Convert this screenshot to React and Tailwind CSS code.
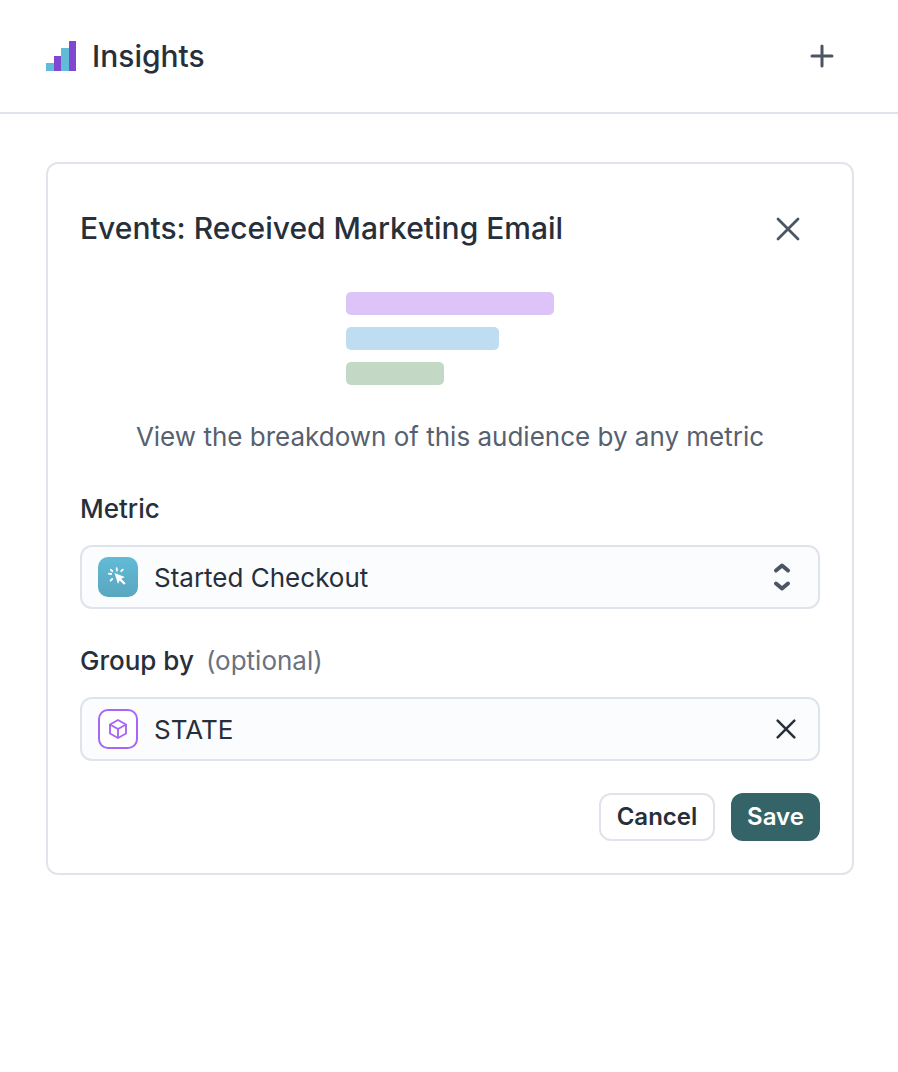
import React from "react";

const Cursor = () => (
  <svg width="24" height="24" viewBox="0 0 24 24" fill="none">
    <path d="M8.5 8 L18.8 12 L15.2 13.8 L19.6 18.2 L18 19.8 L13.6 15.4 L12 19 Z" fill="#fff" />
    <path d="M10.7 3.2 L10.9 5.6 M2.8 8.6 L5.2 9 M4.8 4.8 L6.4 6.2 M16.8 4.6 L15.2 6.2 M4.6 15.6 L6.2 14" stroke="#fff" strokeWidth="1.8" strokeLinecap="round" />
  </svg>
);

const Cube = () => (
  <svg width="20" height="20" viewBox="0 0 20 20" fill="none" stroke="#a866f5" strokeWidth="1.9" strokeLinejoin="round">
    <path d="M10 1 L18 5.5 V14.5 L10 19 L2 14.5 V5.5 Z" />
    <path d="M2 5.5 L10 10 L18 5.5 M10 10 V19" />
  </svg>
);

const X = ({ size, color, sw }) => (
  <svg width={size} height={size} viewBox="0 0 24 24" fill="none" stroke={color} strokeWidth={sw} strokeLinecap="round">
    <path d="M2 2 L22 22 M22 2 L2 22" />
  </svg>
);

export default function App() {
  return (
    <div className="h-[1072px] w-[898px] bg-white font-['Inter',sans-serif] text-[#272f3a]">
      <header className="flex h-[114px] items-center justify-between border-b-2 border-[#dfe3ea] pl-[46px] pr-[64px]">
        <div className="flex items-center gap-4">
          <svg width="30" height="30" viewBox="0 0 30 30">
            <rect x="0" y="22" width="8" height="8" fill="#62bbd7" />
            <rect x="8" y="15" width="7" height="15" fill="#8048cf" />
            <rect x="15" y="7" width="8" height="23" fill="#62bbd7" />
            <rect x="23" y="0" width="7" height="30" fill="#8048cf" />
          </svg>
          <span className="text-[30px] leading-[36px] font-medium">Insights</span>
        </div>
        <svg width="24" height="24" viewBox="0 0 24 24" fill="none" stroke="#4b5563" strokeWidth="3" strokeLinecap="round">
          <path d="M12 2 V22 M2 12 H22" />
        </svg>
      </header>
      <div className="ml-[46px] mt-[48px] h-[713px] w-[808px] rounded-[12px] border-2 border-[#e1e4ea] px-[32px] pt-[46px]">
        <div className="flex items-center justify-between pr-[20px]">
          <h1 className="text-[30px] leading-[36px] font-medium">Events: Received Marketing Email</h1>
          <div className="mt-[2px] flex"><X size={24} color="#4b5563" sw={2.8} /></div>
        </div>
        <div className="mt-[46px] flex flex-col items-start gap-3 pl-[266px]">
          <div className="h-[23px] w-[208px] rounded-[5px] bg-[#dcc4f9]" />
          <div className="h-[23px] w-[153px] rounded-[5px] bg-[#bfddf0]" />
          <div className="h-[23px] w-[98px] rounded-[5px] bg-[#c3d9c6]" />
        </div>
        <p className="mt-[34px] text-center text-[26px] leading-[36px] text-[#566170]">View the breakdown of this audience by any metric</p>
        <div className="mt-[36px] text-[26px] leading-[36px] font-medium">Metric</div>
        <div className="mt-[18px] flex h-[64px] items-center justify-between rounded-[12px] border-2 border-[#dfe3ea] bg-[#fbfcfe] pl-[16px] pr-[26px]">
          <div className="flex items-center gap-4">
            <div className="flex h-[40px] w-[40px] items-center justify-center rounded-[10px] bg-gradient-to-b from-[#62bbd5] to-[#5aa6c0]"><Cursor /></div>
            <span className="pt-[2px] text-[26px] leading-[36px]">Started Checkout</span>
          </div>
          <svg width="20" height="32" viewBox="0 0 20 32" fill="none" stroke="#4b5563" strokeWidth="4" strokeLinecap="round" strokeLinejoin="round">
            <path d="M4 9.5 L10 4.5 L16 9.5 M4 22.5 L10 27.5 L16 22.5" />
          </svg>
        </div>
        <div className="mt-[34px] flex items-center gap-[12px] text-[26px] leading-[36px]">
          <span className="font-medium">Group by</span>
          <span className="text-[#6b7280]">(optional)</span>
        </div>
        <div className="mt-[18px] flex h-[64px] items-center justify-between rounded-[12px] border-2 border-[#dfe3ea] bg-[#fbfcfe] pl-[16px] pr-[22px]">
          <div className="flex items-center gap-4">
            <div className="flex h-[40px] w-[40px] items-center justify-center rounded-[10px] border-2 border-[#a866f5] bg-white"><Cube /></div>
            <span className="pt-[2px] text-[26px] leading-[36px]">STATE</span>
          </div>
          <X size={20} color="#272f3a" sw={3} />
        </div>
        <div className="mt-[32px] flex justify-end gap-4">
          <button className="h-[48px] w-[116px] rounded-[12px] border-2 border-[#dfe3ea] bg-white text-[24px] font-semibold">Cancel</button>
          <button className="h-[48px] w-[89px] rounded-[12px] bg-[#356468] text-[24px] font-semibold text-white">Save</button>
        </div>
      </div>
    </div>
  );
}
